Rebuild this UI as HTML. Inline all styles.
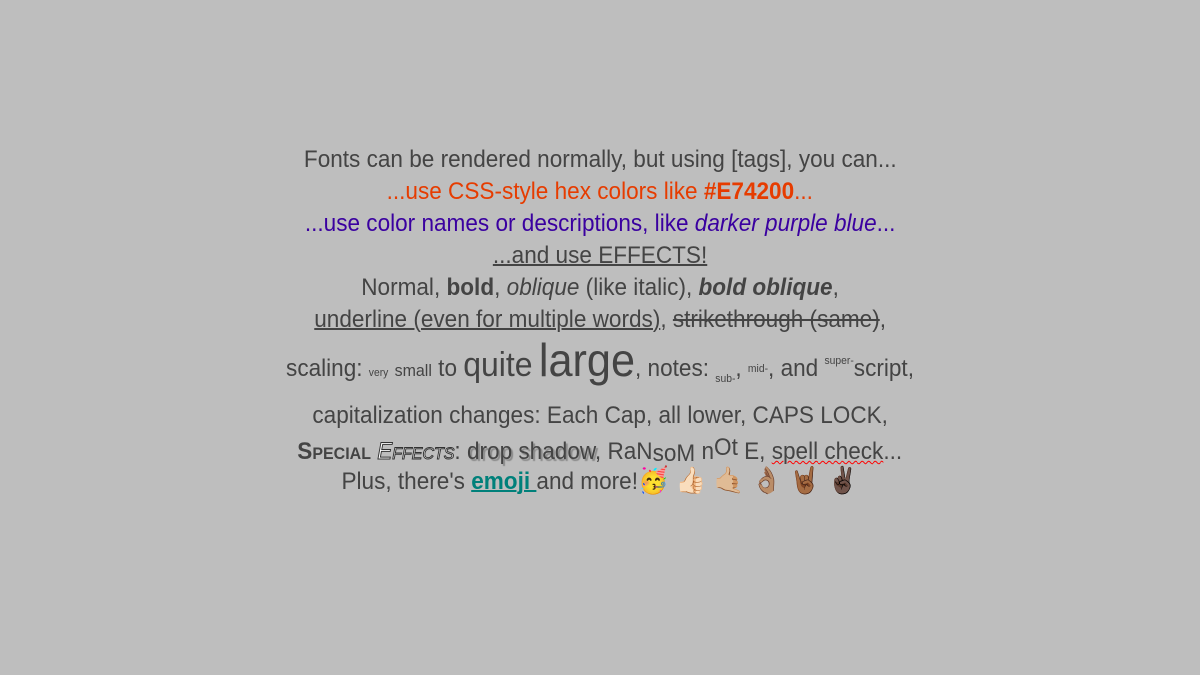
<!DOCTYPE html>
<html><head><meta charset="utf-8"><style>
html,body{margin:0;padding:0}
body{width:1200px;height:675px;background:#bebebe;position:relative;overflow:hidden;font-family:"Liberation Sans",sans-serif;color:#444;font-size:24px}
.l{position:absolute;left:0;width:1200px;text-align:center;white-space:nowrap;line-height:32px}
.l>span{display:inline-block;transform:scaleX(0.94);transform-origin:center}
u{text-decoration:underline;text-decoration-thickness:2px}
s{text-decoration-thickness:2px}
.sc{font-variant:small-caps;font-weight:bold}
.out{font-style:italic;font-variant:small-caps;color:#fff;-webkit-text-stroke:1px #333}
.sh{text-shadow:2px 2px 1px #888}
.e{font-size:26px;margin-left:8px}
</style></head><body>
<div class="l" style="top:144px"><span>Fonts can be rendered normally, but using [tags], you can...</span></div>
<div class="l" style="top:176px;color:#e63c00"><span>...use CSS-style hex colors like <b>#E74200</b>...</span></div>
<div class="l" style="top:208px;color:#3a00a0"><span>...use color names or descriptions, like <i>darker purple blue</i>...</span></div>
<div class="l" style="top:240px"><span><u>...and use EFFECTS!</u></span></div>
<div class="l" style="top:272px"><span>Normal, <b>bold</b>, <i>oblique</i> (like italic), <b><i>bold oblique</i></b>,</span></div>
<div class="l" style="top:304px"><span><u>underline (even for multiple words)</u>, <s>strikethrough (same)</s>,</span></div>
<div class="l" style="top:340px;line-height:40px"><span>scaling: <span style="font-size:11px">very</span> <span style="font-size:17px">small</span> to <span style="font-size:34px">quite</span> <span style="font-size:46px">large</span>, notes: <sub style="font-size:11px">sub-</sub>, <sup style="font-size:11px;vertical-align:4px">mid-</sup>, and <sup style="font-size:11px;vertical-align:12px">super-</sup>script,</span></div>
<div class="l" style="top:400px"><span>capitalization changes: Each Cap, all lower, CAPS LOCK,</span></div>
<div class="l" style="top:432px"><span><span class="sc">Special</span> <span class="out">Effects</span>: <span class="sh">drop shadow</span>, RaN<span style="vertical-align:-2px">soM</span> n<span style="vertical-align:4px">Ot</span> E, <span style="text-decoration:underline wavy red 1px">spell check</span>...</span></div>
<div class="l" style="top:464px"><span>Plus, there's <u style="color:#00807a;font-weight:bold">emoji </u> and more!<span style="font-size:26px">🥳</span><span class="e">👍🏻</span><span class="e">🤙🏼</span><span class="e">👌🏽</span><span class="e">🤘🏾</span><span class="e">✌🏿</span></span></div>
</body></html>
